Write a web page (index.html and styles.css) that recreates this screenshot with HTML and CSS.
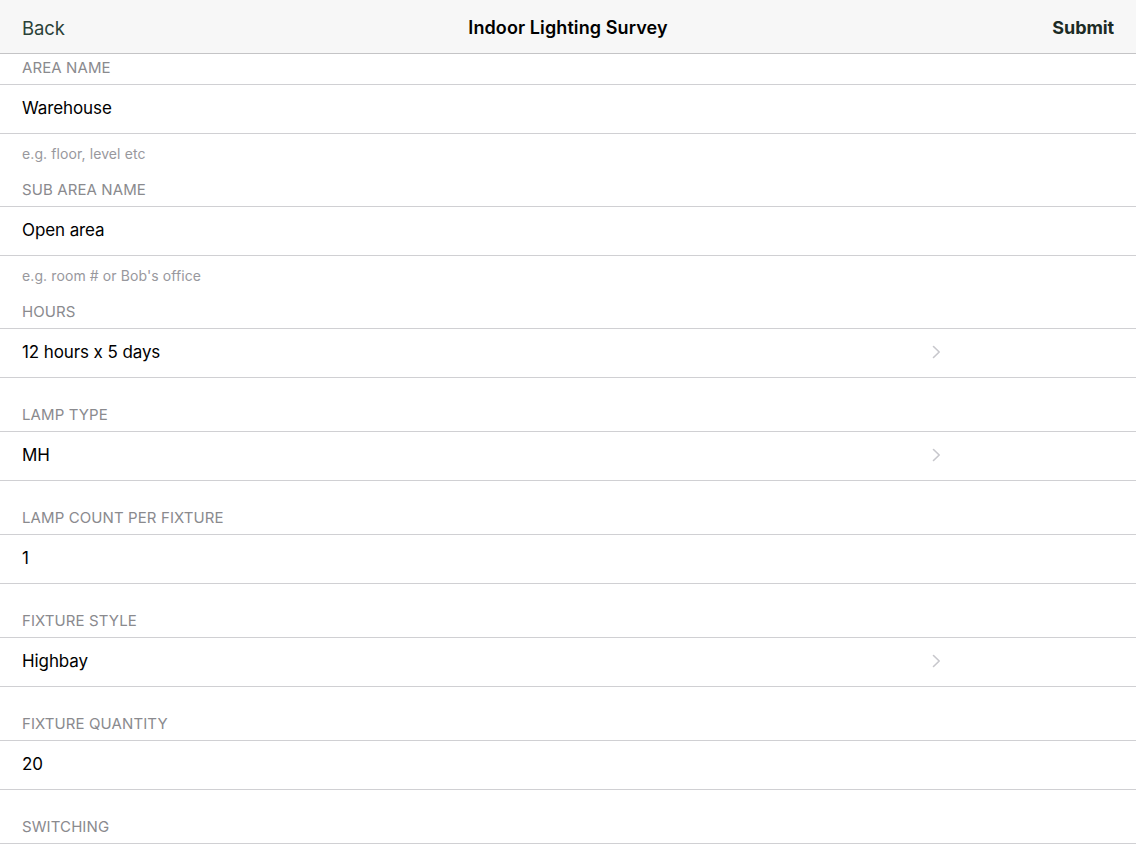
FILE: index.html
```html
<!DOCTYPE html>
<html lang="en">
<head>
<meta charset="utf-8">
<title>Indoor Lighting Survey</title>
<link rel="stylesheet" href="styles.css">
</head>
<body>
<header class="nav">
  <span class="nav-back">Back</span>
  <span class="nav-title">Indoor Lighting Survey</span>
  <span class="nav-submit">Submit</span>
</header>
<main class="form">
  <div class="sec-head first"><span>AREA NAME</span></div>
  <div class="cell"><span class="value">Warehouse</span></div>
  <div class="sec-foot"><span>e.g. floor, level etc</span></div>

  <div class="sec-head short"><span>SUB AREA NAME</span></div>
  <div class="cell"><span class="value">Open area</span></div>
  <div class="sec-foot"><span>e.g. room # or Bob's office</span></div>

  <div class="sec-head short"><span>HOURS</span></div>
  <div class="cell"><span class="value">12 hours x 5 days</span><svg class="chev" viewBox="0 0 9 14" width="9" height="14"><path d="M1.5 1.5 L7.2 7 L1.5 12.5" fill="none" stroke="#c7c7cc" stroke-width="1.6" stroke-linecap="round" stroke-linejoin="round"/></svg></div>

  <div class="sec-head"><span>LAMP TYPE</span></div>
  <div class="cell"><span class="value">MH</span><svg class="chev" viewBox="0 0 9 14" width="9" height="14"><path d="M1.5 1.5 L7.2 7 L1.5 12.5" fill="none" stroke="#c7c7cc" stroke-width="1.6" stroke-linecap="round" stroke-linejoin="round"/></svg></div>

  <div class="sec-head"><span>LAMP COUNT PER FIXTURE</span></div>
  <div class="cell"><span class="value">1</span></div>

  <div class="sec-head"><span>FIXTURE STYLE</span></div>
  <div class="cell"><span class="value">Highbay</span><svg class="chev" viewBox="0 0 9 14" width="9" height="14"><path d="M1.5 1.5 L7.2 7 L1.5 12.5" fill="none" stroke="#c7c7cc" stroke-width="1.6" stroke-linecap="round" stroke-linejoin="round"/></svg></div>

  <div class="sec-head"><span>FIXTURE QUANTITY</span></div>
  <div class="cell"><span class="value">20</span></div>

  <div class="sec-head"><span>SWITCHING</span></div>
  <div class="cell"><span class="value"></span></div>
</main>
</body>
</html>
```
FILE: styles.css
```css
* { box-sizing: border-box; }
html, body {
  margin: 0;
  padding: 0;
  background: #ffffff;
  font-family: Inter, "Noto Sans", "Liberation Sans", sans-serif;
  color: #000;
  overflow: hidden;
}
.nav {
  height: 54px;
  background: #f7f7f7;
  border-bottom: 1px solid #c4c4c6;
  display: flex;
  align-items: center;
  justify-content: space-between;
  padding: 2px 22px 0 22px;
  position: relative;
}
.nav-back {
  font-size: 18.5px;
  color: #2a4238;
  letter-spacing: -0.1px;
}
.nav-title {
  position: absolute;
  left: 0;
  right: 0;
  text-align: center;
  font-size: 18px;
  font-weight: 600;
  letter-spacing: 0.1px;
  pointer-events: none;
}
.nav-submit {
  font-size: 18px;
  font-weight: 700;
  color: #1c2b25;
  letter-spacing: -0.1px;
}
.form {
  display: flex;
  flex-direction: column;
}
.sec-head {
  height: 53px;
  display: flex;
  align-items: flex-end;
  padding: 0 22px 8px;
  font-size: 15px;
  line-height: 16px;
  color: #8a8a8e;
  letter-spacing: 0.1px;
}
.sec-head.first { height: 30px; }
.sec-head.short { height: 36px; }
.cell {
  height: 50px;
  border-top: 1px solid #d0d0d3;
  border-bottom: 1px solid #d0d0d3;
  display: flex;
  align-items: center;
  padding: 0 0 2px 22px;
  font-size: 17px;
  letter-spacing: -0.1px;
}
.value { flex: 1; }
.chev {
  margin-right: 195px;
  flex: none;
}
.sec-foot {
  height: 36px;
  padding: 12px 22px 0;
  font-size: 14px;
  line-height: 15px;
  color: #98989d;
  letter-spacing: 0.1px;
}
```
